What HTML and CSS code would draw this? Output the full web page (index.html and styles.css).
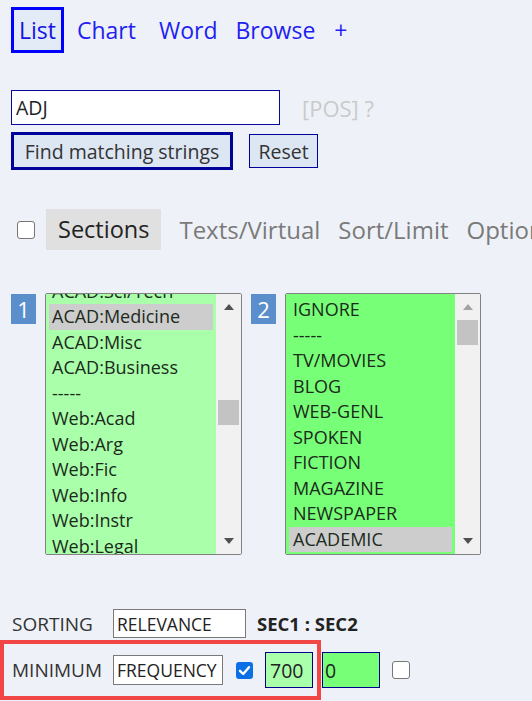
FILE: index.html
```html
<!DOCTYPE html>
<html>
<head>
<meta charset="utf-8">
<link rel="stylesheet" href="styles.css">
</head>
<body>
<div class="page">
  <nav class="nav">
    <a class="tab active">List</a>
    <a class="tab t-chart">Chart</a>
    <a class="tab t-word">Word</a>
    <a class="tab t-browse">Browse</a>
    <a class="tab t-plus">+</a>
  </nav>

  <div class="search">
    <div class="row1">
      <input class="word" type="text" value="ADJ">
      <span class="pos">[POS] ?</span>
    </div>
    <div class="row2">
      <button class="find">Find matching strings</button>
      <button class="reset">Reset</button>
    </div>
  </div>

  <div class="tabs2">
    <span class="cb"></span>
    <span class="sections">Sections</span>
    <span class="tab2">Texts/Virtual</span>
    <span class="tab2">Sort/Limit</span>
    <span class="tab2">Options</span>
  </div>

  <div class="lists">
    <div class="group">
      <span class="badge">1</span>
      <div class="listbox">
        <div class="items g1">
          <div class="scroll s1">
            <div class="item">ACAD:Sci/Tech</div>
            <div class="item sel">ACAD:Medicine</div>
            <div class="item">ACAD:Misc</div>
            <div class="item">ACAD:Business</div>
            <div class="item">-----</div>
            <div class="item">Web:Acad</div>
            <div class="item">Web:Arg</div>
            <div class="item">Web:Fic</div>
            <div class="item">Web:Info</div>
            <div class="item">Web:Instr</div>
            <div class="item">Web:Legal</div>
            <div class="item">Web:News</div>
          </div>
        </div>
        <div class="sb">
          <div class="btn"><span class="up"></span></div>
          <div class="track"><div class="thumb th1"></div></div>
          <div class="btn"><span class="down"></span></div>
        </div>
      </div>
    </div>
    <div class="group">
      <span class="badge">2</span>
      <div class="listbox lb2">
        <div class="items g2">
          <div class="scroll">
            <div class="item">IGNORE</div>
            <div class="item">-----</div>
            <div class="item">TV/MOVIES</div>
            <div class="item">BLOG</div>
            <div class="item">WEB-GENL</div>
            <div class="item">SPOKEN</div>
            <div class="item">FICTION</div>
            <div class="item">MAGAZINE</div>
            <div class="item">NEWSPAPER</div>
            <div class="item sel">ACADEMIC</div>
            <div class="item">-----</div>
          </div>
        </div>
        <div class="sb">
          <div class="btn"><span class="up dis"></span></div>
          <div class="track"><div class="thumb"></div></div>
          <div class="btn"><span class="down"></span></div>
        </div>
      </div>
    </div>
  </div>

  <div class="sorting">
    <span class="lbl">SORTING</span>
    <input class="sel-in w-rel" type="text" value="RELEVANCE">
    <span class="sec">SEC1 : SEC2</span>
  </div>

  <div class="minrow">
    <div class="redbox">
      <span class="lbl">MINIMUM</span>
      <input class="sel-in w-freq" type="text" value="FREQUENCY">
      <span class="cb checked"><svg viewBox="0 0 17 17" width="17" height="17"><path d="M4 8.8 L7.2 12 L13 5.2" fill="none" stroke="#fff" stroke-width="2.4" stroke-linecap="round" stroke-linejoin="round"/></svg></span>
      <input class="num n700" type="text" value="700">
    </div>
    <input class="num n0" type="text" value="0">
    <span class="cb cb-last"></span>
  </div>
</div>
</body>
</html>
```

FILE: styles.css
```css
html, body {
  margin: 0;
  padding: 0;
  background: #eef2f8;
}
body {
  font-family: "Open Sans", "Noto Sans", sans-serif;
  overflow: hidden;
}
.page {
  width: 532px;
  height: 701px;
  overflow: hidden;
}

/* top nav */
.nav {
  display: flex;
  align-items: center;
  padding: 7px 0 0 11px;
  height: 46px;
}
.tab {
  font-size: 23px;
  color: #1f1ff2;
  line-height: 40px;
  text-decoration: none;
}
.tab.active {
  border: 3px solid #0000ff;
  background: #e3ebf6;
  padding: 0 5px;
  color: #1414e0;
}
.t-chart { margin-left: 13px; }
.t-word { margin-left: 23px; }
.t-browse { margin-left: 18px; }
.t-plus { margin-left: 19px; }

/* search */
.search {
  margin-top: 37px;
  padding-left: 11px;
}
.row1 {
  display: flex;
  align-items: center;
}
.word {
  width: 269px;
  height: 35px;
  box-sizing: border-box;
  border: 1px solid #0a0a9a;
  background: #fff;
  font-family: "Open Sans", sans-serif;
  font-size: 19.5px;
  color: #222;
  padding: 0 4px;
  margin: 0;
  outline: none;
}
.pos {
  margin-left: 22px;
  color: #cacaca;
  font-size: 22px;
}
.row2 {
  display: flex;
  align-items: center;
  gap: 16px;
  margin-top: 7px;
}
.find, .reset {
  font-family: "Open Sans", sans-serif;
  font-size: 19.5px;
  color: #333;
  background: #dde7f3;
  padding: 0;
  margin: 0;
  box-sizing: border-box;
}
.find {
  width: 222px;
  height: 38px;
  border: 3px solid #00009a;
}
.reset {
  width: 69px;
  height: 34px;
  border: 1px solid #00009a;
}

/* section tabs */
.tabs2 {
  display: flex;
  align-items: center;
  margin-top: 39px;
  height: 41px;
  padding-left: 17px;
  white-space: nowrap;
  overflow: hidden;
}
.tabs2 > * { flex-shrink: 0; }
.cb {
  display: inline-block;
  width: 18px;
  height: 18px;
  border: 1px solid #767676;
  border-radius: 3px;
  background: #fff;
  box-sizing: border-box;
  flex-shrink: 0;
}
.sections {
  margin-left: 11px;
  background: #e0e0e0;
  height: 41px;
  line-height: 41px;
  padding: 0 12px 0 12px;
  font-size: 23.5px;
  color: #222;
}
.tab2 {
  margin-left: 18px;
  font-size: 24px;
  color: #7a7a7a;
  line-height: 41px;
}

/* list boxes */
.lists {
  display: flex;
  align-items: flex-start;
  gap: 9px;
  margin-top: 43px;
  padding-left: 11px;
}
.group {
  display: flex;
  align-items: flex-start;
  gap: 9px;
}
.badge {
  width: 25px;
  height: 30px;
  margin-top: 1px;
  background: #5b8fcb;
  color: #fff;
  font-size: 22px;
  line-height: 30px;
  text-align: center;
}
.listbox {
  width: 197px;
  height: 262px;
  border: 1px solid #828282;
  border-radius: 2px;
  box-sizing: border-box;
  display: flex;
  overflow: hidden;
}
.lb2 { width: 196px; }
.items {
  flex: 1;
  padding: 3px;
  overflow: hidden;
}
.g1 { background: #aaffaa; }
.g2 { background: #77ff77; }
.s1 { margin-top: -18.5px; }
.item {
  height: 25.5px;
  line-height: 25.5px;
  padding-left: 3px;
  font-size: 18px;
  color: #1c2a1c;
  white-space: nowrap;
}
.g2 .item { padding-left: 4px; }
.item.sel { background: #cdcdcd; }
.sb {
  width: 25px;
  flex-shrink: 0;
  background: #f1f1f1;
  display: flex;
  flex-direction: column;
}
.btn {
  height: 26px;
  display: flex;
  align-items: center;
  justify-content: center;
}
.up, .down {
  width: 0;
  height: 0;
  border-left: 5px solid transparent;
  border-right: 5px solid transparent;
}
.up { border-bottom: 6px solid #505050; }
.up.dis { border-bottom-color: #a3a3a3; }
.down { border-top: 6px solid #505050; }
.track {
  flex: 1;
  padding: 0 2px;
}
.thumb {
  height: 25px;
  background: #c3c3c3;
}
.th1 { margin-top: 80px; }

/* bottom rows */
.sorting {
  display: flex;
  align-items: center;
  margin-top: 54px;
  padding-left: 12px;
}
.lbl {
  width: 101px;
  flex-shrink: 0;
  font-size: 19px;
  color: #333;
}
.sel-in {
  box-sizing: border-box;
  border: 1px solid #7a7a7a;
  background: #fff;
  font-family: "Open Sans", sans-serif;
  font-size: 17.5px;
  color: #222;
  padding: 0 0 0 3px;
  margin: 0;
  outline: none;
}
.w-rel { width: 133px; height: 29px; }
.w-freq { width: 110px; height: 30px; }
.sec {
  margin-left: 11px;
  font-size: 18.5px;
  font-weight: bold;
  color: #222;
}
.minrow {
  display: flex;
  align-items: center;
  margin-top: 2px;
}
.redbox {
  display: flex;
  align-items: center;
  height: 60px;
  box-sizing: border-box;
  border: 4px solid #f24646;
  padding: 0 4px 0 8px;
}
.cb.checked {
  width: 17px;
  height: 17px;
  border: none;
  background: #0d6fe6;
  margin-left: 13px;
  display: flex;
}
.num {
  box-sizing: border-box;
  height: 36px;
  border: 1px solid #00008b;
  font-family: "Open Sans", sans-serif;
  font-size: 19.5px;
  color: #222;
  margin: 0;
  outline: none;
}
.n700 {
  width: 48px;
  margin-left: 12px;
  background: #aaffaa;
  padding: 0 0 0 4px;
}
.n0 {
  width: 58px;
  margin-left: 1px;
  background: #77ff77;
  padding: 0 0 0 2px;
}
.cb-last { margin-left: 12px; }
```
